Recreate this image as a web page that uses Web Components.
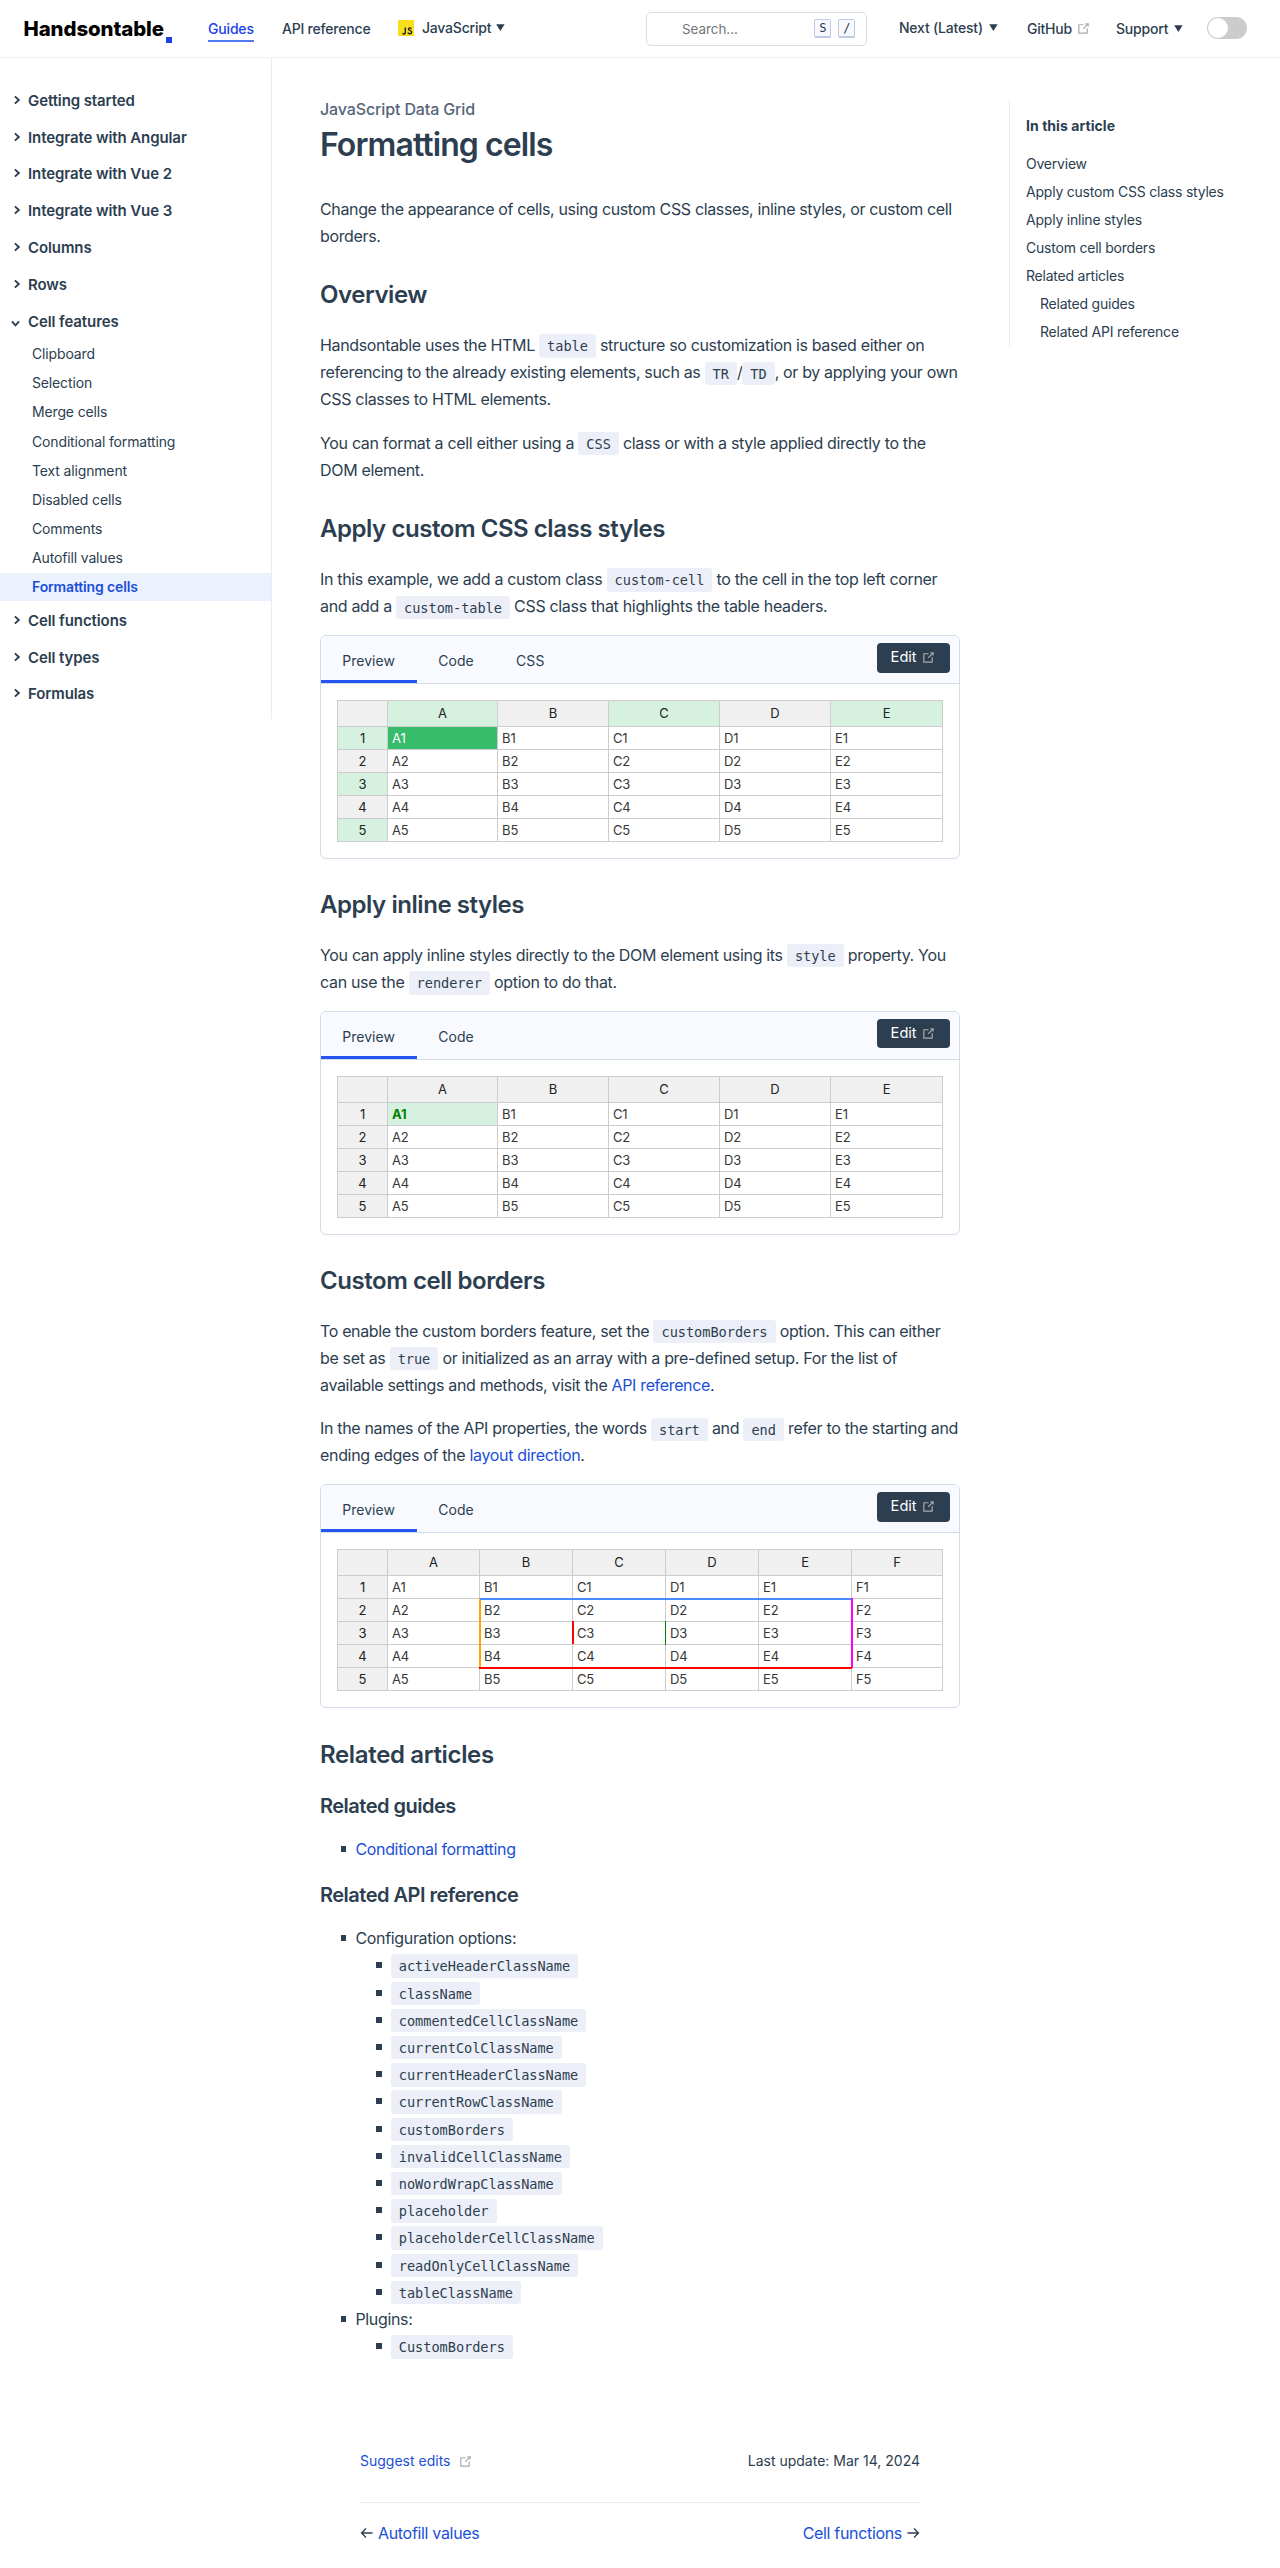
<!DOCTYPE html>
<html lang="en">
<head>
<meta charset="utf-8">
<title>Formatting cells - JavaScript Data Grid | Handsontable</title>
<style>
body{margin:0;background:#fff;color:#2c3e50;font-family:Inter,"Liberation Sans",sans-serif;font-size:16px;height:2568px;overflow:hidden}
</style>
</head>
<body>
<docs-page></docs-page>
<script>
const define = (name, html, setup) => {
  const t = document.createElement('template');
  t.innerHTML = html;
  customElements.define(name, class extends HTMLElement {
    connectedCallback() {
      if (this.shadowRoot) return;
      this.attachShadow({ mode: 'open' }).append(t.content.cloneNode(true));
      if (setup) setup(this, this.shadowRoot);
    }
  });
};

define('ext-icon', `<style>:host{display:inline-block;width:15px;height:15px}svg{display:block}</style>
<svg width="15" height="15" viewBox="0 0 100 100" fill="#aaa"><path d="M18.8,85.1h56l0,0c2.2,0,4-1.8,4-4v-32h-8v28h-48v-48h28v-8h-32l0,0c-2.2,0-4,1.8-4,4v56C14.8,83.3,16.6,85.1,18.8,85.1z"/><polygon points="45.7,48.7 51.3,54.3 77.2,28.5 77.2,37.2 85.2,37.2 85.2,14.9 62.8,14.9 62.8,22.9 71.5,22.9"/></svg>`);

define('drop-caret', `<style>:host{display:inline-block;width:9px;height:7px}svg{display:block}</style>
<svg width="9" height="7"><path d="M.2 0.3h8.4L4.4 6.9z" fill="#2c3e50"/></svg>`);

define('site-logo', `<style>
:host{display:flex;align-items:flex-start;color:#000;height:22px}
span{font:800 20.4px/22px Inter;letter-spacing:-.004em}
i{width:6px;height:6px;background:#1d42e8;margin:19px 0 0 2px}
</style><span>Handsontable</span><i></i>`);

define('search-box', `<style>
:host{display:flex;align-items:center;box-sizing:border-box;width:221px;height:34px;border:1px solid #d3dfe9;border-radius:5px;padding:0 10.5px 0 35px;font-size:13.4px;font-weight:400;color:#757575;letter-spacing:0}
span{flex:1}
kbd{box-sizing:border-box;width:17px;height:19px;border:1px solid #bfcbe0;border-bottom-width:2px;border-radius:2px;background:#f7f9ff;color:#2c3e50;font:12px/16px "DejaVu Sans Mono";text-align:center;margin-left:7px}
</style><span>Search...</span><kbd>S</kbd><kbd>/</kbd>`);

define('toggle-switch', `<style>
:host{display:block;box-sizing:border-box;width:40px;height:22px;border-radius:11px;background:#ccc;padding:1px}
i{display:block;width:20px;height:20px;border-radius:10px;background:#fff}
</style><i></i>`);

define('site-header', `<style>
:host{display:flex;align-items:center;box-sizing:border-box;height:58px;border-bottom:1px solid #eef2f8;padding-left:23.5px;font:500 14px/20px Inter;letter-spacing:-.014em}
a{display:flex;align-items:center;white-space:nowrap;flex:none;height:20px;position:relative}
site-logo,search-box,toggle-switch{flex:none}
.on{color:#1a42e8;width:46px;margin-left:36px;justify-content:center}
.on::after{content:"";position:absolute;left:0;right:0;top:21.5px;height:2px;background:#5278ef}
svg{margin-right:8px}
.up{margin-top:-2px}
</style>
<site-logo></site-logo>
<a class="on">Guides</a>
<a style="margin-left:28px;width:116px">API reference</a>
<a class="up" style="width:248px"><svg width="16" height="16" viewBox="0 0 16 16"><rect width="16" height="16" fill="#f7df1e"/><path d="M7.3 7.5v5q0 1.5-1.3 1.5-.9 0-1.3-.9" stroke="#222" stroke-width="1.4" fill="none"/><path d="M13.3 8.8q-.4-.9-1.5-.9-1.4 0-1.4 1.2 0 .8 1.5 1.3 1.7.6 1.7 1.8 0 1.6-1.8 1.6-1.5 0-2-1.2" stroke="#222" stroke-width="1.4" fill="none"/></svg>JavaScript<drop-caret style="margin-left:5px"></drop-caret></a>
<search-box></search-box>
<a class="up" style="margin-left:32px;width:128px">Next (Latest)<drop-caret style="margin-left:6.5px"></drop-caret></a>
<a style="width:89px">GitHub<ext-icon style="margin-left:4px"></ext-icon></a>
<a style="width:91px">Support<drop-caret style="margin-left:6px"></drop-caret></a>
<toggle-switch style="margin-top:-2px"></toggle-switch>`);

define('side-group', `<style>
:host{display:flex;align-items:center;height:36.8px;padding-left:11px;font:600 15px/20px Inter;letter-spacing:-.0066em}
svg{margin:-2px 7px 0 0}
:host([open]) svg{transform:rotate(90deg) translate(1.5px,.5px)}
</style><svg width="10" height="10" viewBox="0 0 10 10"><path d="M3.9 1.4l3.9 3.6-3.9 3.6" fill="none" stroke="#2c3e50" stroke-width="1.9"/></svg><slot></slot>`);

define('side-link', `<style>
:host{display:block;height:29.15px;padding-left:32px;font:400 14px/28.6px Inter;letter-spacing:-.0105em}
:host([active]){background:#ebf2fd;color:#1a4fd8;font-weight:600;height:28px;line-height:28px;margin-bottom:1.15px}
</style><slot></slot>`);

define('side-bar', `<style>
:host{display:block;box-sizing:border-box;width:272px;height:661px;border-right:1px solid #eaecef;padding-top:24.5px}
</style><slot></slot>`);

define('toc-box', `<style>
:host{display:block;box-sizing:border-box;width:240px;height:246px;border-left:1px solid #eaecef;padding:12px 0 0 16px;font:400 14px/28px Inter;letter-spacing:-.0155em}
b{display:block;font-weight:700;letter-spacing:.004em;margin-bottom:10px}
a{display:block}.n{padding-left:14px}
</style><b>In this article</b><a>Overview</a><a>Apply custom CSS class styles</a><a>Apply inline styles</a><a>Custom cell borders</a><a>Related articles</a><a class="n">Related guides</a><a class="n">Related API reference</a>`);

define('c-ode', `<style>
:host{display:inline;font:13.6px/1 "DejaVu Sans Mono",monospace;letter-spacing:-.002em;background:#eceff7;border-radius:3px;padding:3.7px 8px;color:#2c3e50;white-space:nowrap}
</style><slot></slot>`);

define('data-grid', `<style>
:host{display:block;position:relative;width:606px;height:142px}
table{table-layout:fixed;width:606px;border-collapse:separate;border-spacing:0;font:400 13px/22px Inter;color:#373737;letter-spacing:-.01em}
th,td{box-sizing:border-box;border-right:1px solid #ccc;border-bottom:1px solid #ccc;padding:0;height:23px;text-align:left;font-weight:400;overflow:hidden}
td{padding-left:4px}
th{background:#f0f0f0;text-align:center;color:#222}
tr>:first-child{border-left:1px solid #ccc}
tr:first-child th{border-top:1px solid #ccc;height:27px;line-height:25px}
:host([kind=class]) tr:first-child th:nth-child(2n),:host([kind=class]) tr:nth-child(2n) th{background:#d7f1e1}
:host([kind=class]) .a1{background:#37bc6c;color:#fff}
:host([kind=inline]) .a1{background:#d7f1e1;color:green;font-weight:700}
i{position:absolute}
</style><table></table><slot></slot>`, (el, root) => {
  const widths = el.getAttribute('cols').split(',');
  const table = root.querySelector('table');
  const letters = 'ABCDEF'.slice(0, widths.length).split('');
  let html = '<colgroup><col style="width:51px">' + widths.map(w => `<col style="width:${w}px">`).join('') + '</colgroup><tbody><tr><th></th>' + letters.map(l => `<th>${l}</th>`).join('') + '</tr>';
  for (let r = 1; r < 6; r++) html += `<tr><th>${r}</th>` + letters.map(l => `<td class="${l.toLowerCase()}${r}">${l}${r}</td>`).join('') + '</tr>';
  table.innerHTML = html + '</tbody>';
  if (el.getAttribute('kind') === 'borders') {
    // custom borders drawn over the grid: x, y, width, height, colour
    for (const [x, y, w, h, c] of [[142,49,2,70,'#ffa500'],[143,49,373,2,'#4b89ff'],[514,49,2,70,'#ff00ff'],[142,118,373,2,'#f00'],[235,72,2,23,'#f00'],[328,72,1,24,'green']]) {
      const i = document.createElement('i');
      i.style.cssText = `left:${x}px;top:${y}px;width:${w}px;height:${h}px;background:${c}`;
      root.append(i);
    }
  }
});

define('example-box', `<style>
:host{display:block;box-sizing:border-box;height:224px;border:1px solid #d0dce8;border-radius:6px;overflow:hidden;margin:14.7px 0 30.7px;letter-spacing:0}
header{display:flex;box-sizing:border-box;height:48px;background:#f9faff;border-bottom:1px solid #d0dce8;font:400 14px/49px Inter;letter-spacing:.003em}
header span{padding:0 21.2px}
header span:first-child{box-sizing:border-box;width:96px;height:47px;border-bottom:3px solid #2554f0}
button{display:flex;align-items:center;box-sizing:border-box;width:73px;height:29.4px;margin:7px 9.4px 0 auto;padding:0 0 0 14px;border:0;border-radius:4px;background:#2c3e50;color:#fff;font:400 14.6px/29px Inter}
button ext-icon{margin-left:4px}
main{padding:16px}
</style><header></header><main><slot></slot></main>`, (el, root) => {
  root.querySelector('header').innerHTML = el.getAttribute('tabs').split(',').map(t => `<span>${t}</span>`).join('') + '<button>Edit<ext-icon></ext-icon></button>';
});

define('page-nav', `<style>
:host{display:block;width:560px;margin:84px 0 0 40px;letter-spacing:0}
div{display:flex;justify-content:space-between;align-items:center}
.m{font:400 14px/34px Inter;height:34px}
.e{color:#1a4fd8;display:flex;align-items:center}
.e ext-icon{margin-left:8px}
.n{font:400 16px/28px Inter;letter-spacing:-.02em;border-top:1px solid #eaecef;margin-top:24px;padding-top:16px}
a{color:#1a4fd8}
svg{vertical-align:0}
</style>
<div class="m"><span class="e">Suggest edits <ext-icon></ext-icon></span><span>Last update: Mar 14, 2024</span></div>
<div class="n"><span><svg width="13" height="12" viewBox="0 0 13 12"><path d="M12.5 6H1.5M6 1.5L1.5 6L6 10.5" fill="none" stroke="#2c3e50" stroke-width="1.3"/></svg><a style="margin-left:5px">Autofill values</a></span><span><a style="margin-right:5px">Cell functions</a><svg width="13" height="12" viewBox="0 0 13 12"><path d="M.5 6h11M7 1.5L11.5 6L7 10.5" fill="none" stroke="#2c3e50" stroke-width="1.3"/></svg></span></div>`);

define('doc-article', `<style>
:host{display:block;width:642px;padding-top:37.6px;line-height:27.2px;letter-spacing:-.0205em}
.w{width:640px}
.label{font-weight:500;letter-spacing:-.0081em;color:#56647a}
h1{font:600 32px/40px Inter;margin:2px 0 30.8px;letter-spacing:-.0285em}
h1+p{letter-spacing:-.0225em}
h2{font:600 24px/30px Inter;margin:30px 0 22px;letter-spacing:-.0185em}
h3{font:600 20px/28px Inter;margin:22.4px 0 15.4px;letter-spacing:-.0255em}
ul+h3{margin:18.2px 0 15.9px}
p{margin:0 -6px 16px 0}
h2+p:not(:has(+example-box)){letter-spacing:-.0215em}
example-box+h2{margin-top:0}
example-box+h2.last{margin-top:31.6px;letter-spacing:-.014em}
p:has(+example-box){margin-bottom:0}
a{color:#1a4fd8}
ul{margin:0;padding-left:35.4px;list-style:none}
li::before{content:"";display:inline-block;width:5.4px;height:6px;margin:0 9px 0 -14.4px;background:#2c3e50;vertical-align:2.7px}
</style>
<div class="w">
<div class="label">JavaScript Data Grid</div>
<h1>Formatting cells</h1>
<p>Change the appearance of cells, using custom CSS classes, inline styles, or custom cell<br>borders.</p>
<h2>Overview</h2>
<p>Handsontable uses the HTML <c-ode>table</c-ode> structure so customization is based either on<br>referencing to the already existing elements, such as <c-ode>TR</c-ode>/<c-ode>TD</c-ode>, or by applying your own<br>CSS classes to HTML elements.</p>
<p>You can format a cell either using a <c-ode>CSS</c-ode> class or with a style applied directly to the<br>DOM element.</p>
<h2>Apply custom CSS class styles</h2>
<p>In this example, we add a custom class <c-ode>custom-cell</c-ode> to the cell in the top left corner<br>and add a <c-ode>custom-table</c-ode> CSS class that highlights the table headers.</p>
<example-box tabs="Preview,Code,CSS"><data-grid kind="class" cols="110,111,111,111,112"></data-grid></example-box>
<h2>Apply inline styles</h2>
<p>You can apply inline styles directly to the DOM element using its <c-ode>style</c-ode> property. You<br>can use the <c-ode>renderer</c-ode> option to do that.</p>
<example-box tabs="Preview,Code"><data-grid kind="inline" cols="110,111,111,111,112"></data-grid></example-box>
<h2>Custom cell borders</h2>
<p>To enable the custom borders feature, set the <c-ode>customBorders</c-ode> option. This can either<br>be set as <c-ode>true</c-ode> or initialized as an array with a pre-defined setup. For the list of<br>available settings and methods, visit the <a>API reference</a>.</p>
<p>In the names of the API properties, the words <c-ode>start</c-ode> and <c-ode>end</c-ode> refer to the starting and<br>ending edges of the <a>layout direction</a>.</p>
<example-box tabs="Preview,Code"><data-grid kind="borders" cols="92,93,93,93,93,91"></data-grid></example-box>
<h2 class="last">Related articles</h2>
<h3>Related guides</h3>
<ul><li><a>Conditional formatting</a></li></ul>
<h3>Related API reference</h3>
<ul><li>Configuration options:<ul><li><c-ode>activeHeaderClassName</c-ode></li><li><c-ode>className</c-ode></li><li><c-ode>commentedCellClassName</c-ode></li><li><c-ode>currentColClassName</c-ode></li><li><c-ode>currentHeaderClassName</c-ode></li><li><c-ode>currentRowClassName</c-ode></li><li><c-ode>customBorders</c-ode></li><li><c-ode>invalidCellClassName</c-ode></li><li><c-ode>noWordWrapClassName</c-ode></li><li><c-ode>placeholder</c-ode></li><li><c-ode>placeholderCellClassName</c-ode></li><li><c-ode>readOnlyCellClassName</c-ode></li><li><c-ode>tableClassName</c-ode></li></ul></li><li>Plugins:<ul><li><c-ode>CustomBorders</c-ode></li></ul></li></ul>
<page-nav></page-nav>
</div>`);

define('docs-page', `<style>
:host{display:block;width:1280px}
.cols{display:flex;align-items:flex-start}
doc-article{margin-left:48px}
toc-box{margin:42px 0 0 47px}
</style>
<site-header></site-header>
<div class="cols">
<side-bar>
<side-group>Getting started</side-group><side-group>Integrate with Angular</side-group><side-group>Integrate with Vue 2</side-group><side-group>Integrate with Vue 3</side-group><side-group>Columns</side-group><side-group>Rows</side-group><side-group open>Cell features</side-group>
<side-link>Clipboard</side-link><side-link>Selection</side-link><side-link>Merge cells</side-link><side-link>Conditional formatting</side-link><side-link>Text alignment</side-link><side-link>Disabled cells</side-link><side-link>Comments</side-link><side-link>Autofill values</side-link><side-link active>Formatting cells</side-link>
<side-group>Cell functions</side-group><side-group>Cell types</side-group><side-group>Formulas</side-group>
</side-bar>
<doc-article></doc-article>
<toc-box></toc-box>
</div>`);
</script>
</body>
</html>
